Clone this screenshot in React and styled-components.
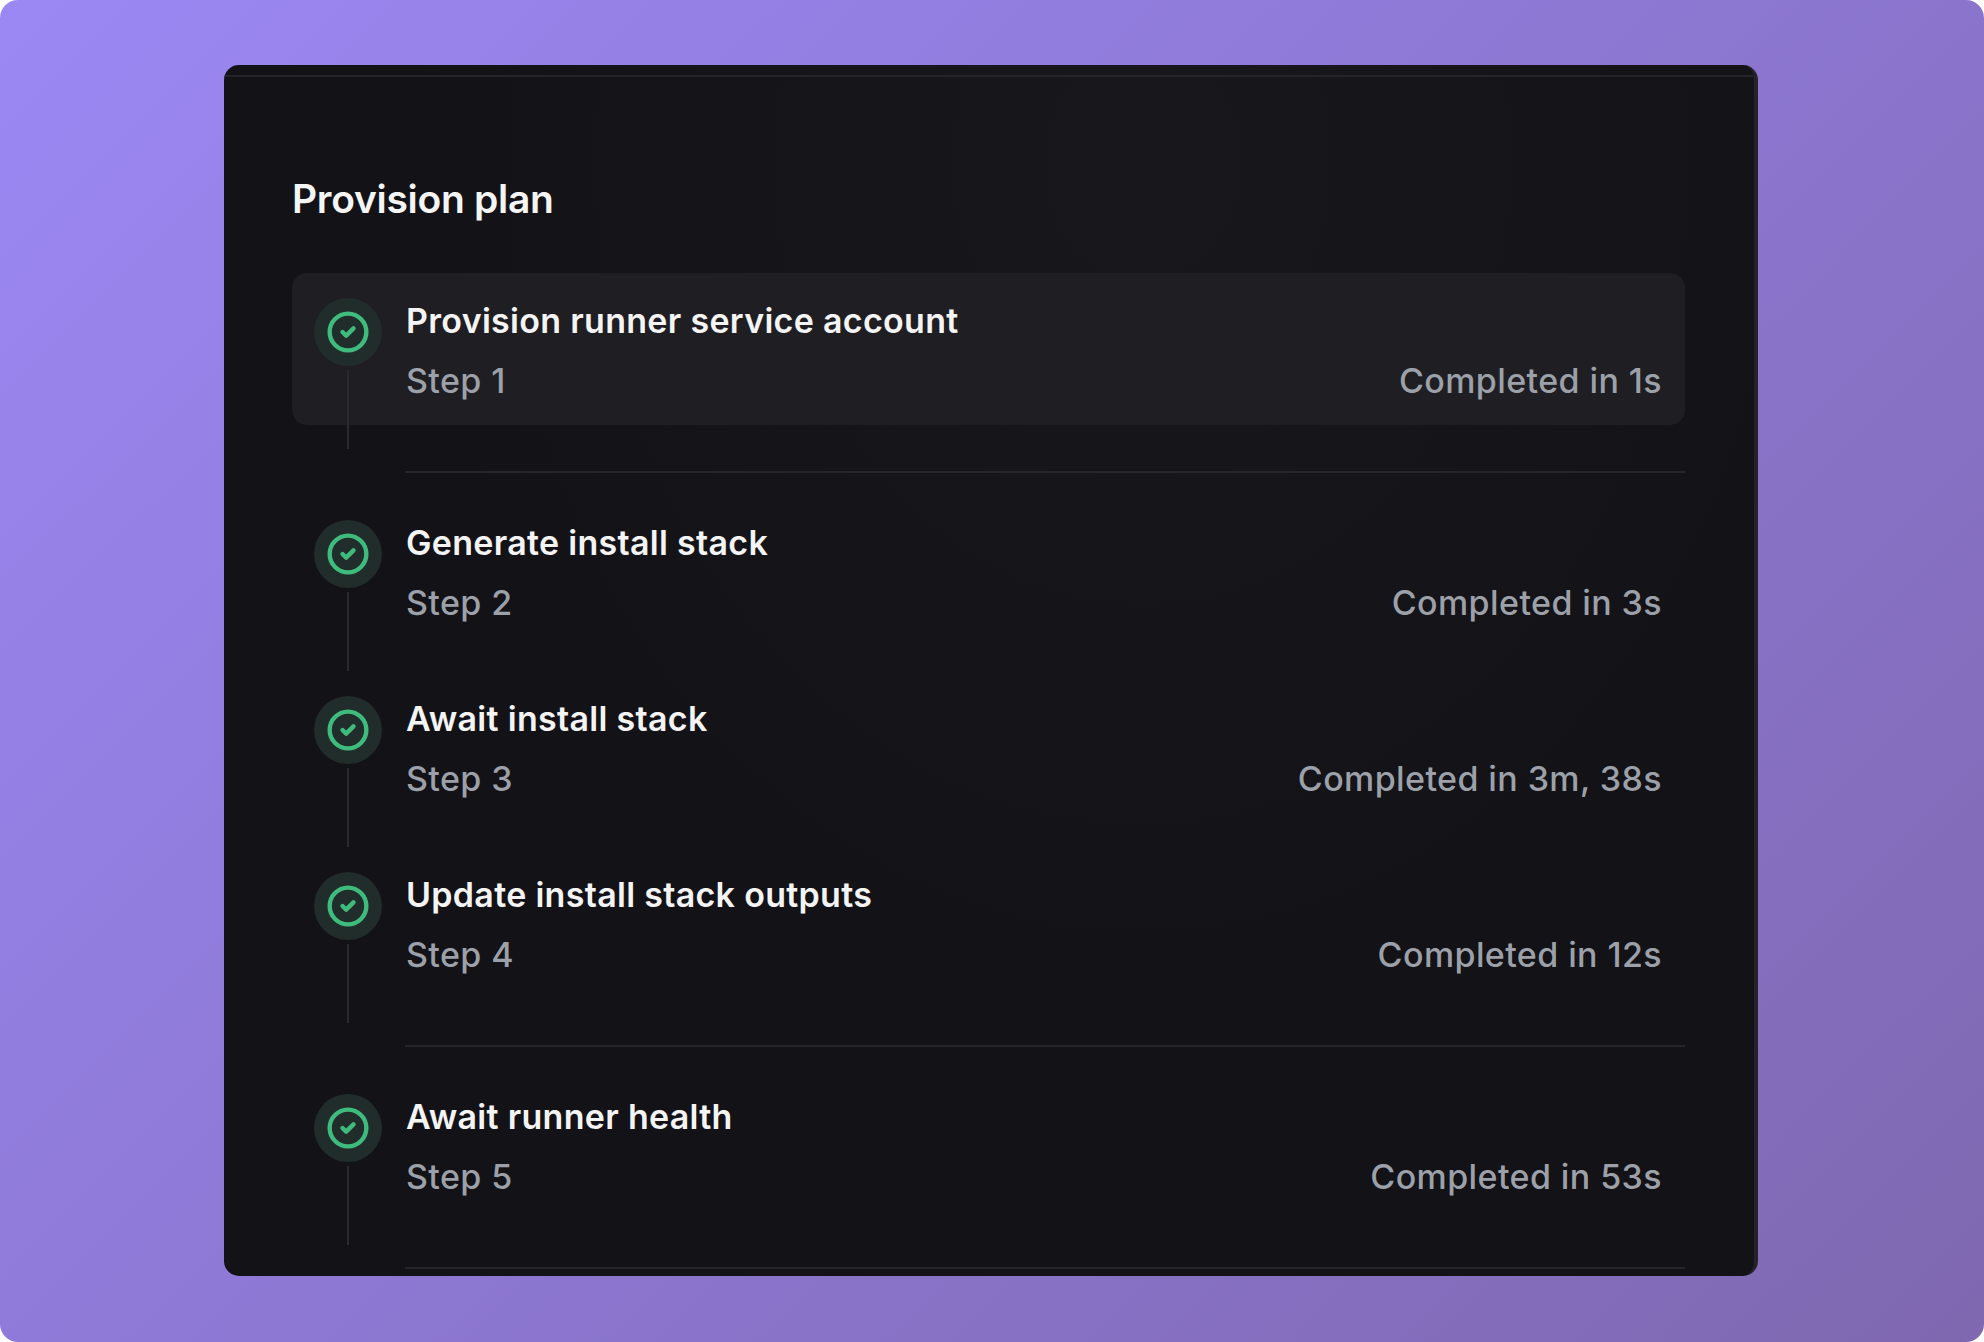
import React from "react";
import styled, { createGlobalStyle } from "styled-components";
import { CircleCheck } from "lucide-react";

const Global = createGlobalStyle`
  html, body { margin: 0; padding: 0; background: #ffffff; }
  body { font-family: Inter, "Noto Sans", sans-serif; -webkit-font-smoothing: antialiased; }
`;

const Frame = styled.div`
  width: 1984px;
  height: 1342px;
  box-sizing: border-box;
  border-radius: 18px;
  overflow: hidden;
  background: linear-gradient(135deg, #9b88f3 0%, #8e79d6 45%, #7f68b0 100%);
  padding: 65px 226px 0 224px;
`;

const Card = styled.div`
  height: 1211px;
  box-sizing: border-box;
  border-radius: 15px;
  overflow: hidden;
  background: radial-gradient(ellipse at 60% 8%, #18171c 0%, #131217 55%);
  border-right: 4px solid #24232a;
  padding-top: 10px;
`;

const Inner = styled.div`
  border-top: 2px solid #24232a;
  padding: 100px 69px 0 68px;
`;

const Title = styled.h1`
  margin: 0 0 52px;
  font-size: 39px;
  line-height: 44px;
  font-weight: 600;
  color: #f5f5f6;
  letter-spacing: -0.3px;
`;

const Divider = styled.div`
  height: 2px;
  background: #26252b;
  margin: 22px 0 22px 113px;
`;

const Row = styled.div`
  height: 176px;
`;

const Surface = styled.div`
  height: 152px;
  box-sizing: border-box;
  border-radius: 15px;
  background: ${(p) => (p.$active ? "#1f1e23" : "transparent")};
  display: grid;
  grid-template-columns: 68px 1fr;
  column-gap: 24px;
  padding: 25px 23px 0 22px;
`;

const IconCol = styled.div`
  display: flex;
  flex-direction: column;
  align-items: center;
  gap: 4px;
`;

const Badge = styled.div`
  width: 68px;
  height: 68px;
  border-radius: 50%;
  background: #212d2a;
  display: flex;
  align-items: center;
  justify-content: center;
  color: #3fbb7d;
`;

const Rail = styled.div`
  width: 2px;
  height: 79px;
  background: #2a292f;
`;

const Content = styled.div`
  padding-top: 3px;
  display: flex;
  flex-direction: column;
  gap: 20px;
`;

const StepTitle = styled.div`
  font-size: 34px;
  line-height: 40px;
  font-weight: 600;
  color: #f4f4f5;
  letter-spacing: 0.3px;
`;

const Meta = styled.div`
  display: flex;
  justify-content: space-between;
  font-size: 34px;
  line-height: 40px;
  font-weight: 500;
  color: #9ca1a9;
  letter-spacing: 0.4px;
`;

const groups = [
  [{ t: "Provision runner service account", n: 1, d: "1s", active: true }],
  [
    { t: "Generate install stack", n: 2, d: "3s" },
    { t: "Await install stack", n: 3, d: "3m, 38s" },
    { t: "Update install stack outputs", n: 4, d: "12s" },
  ],
  [{ t: "Await runner health", n: 5, d: "53s" }],
];

function Step({ s }) {
  return (
    <Row>
      <Surface $active={s.active}>
        <IconCol>
          <Badge>
            <CircleCheck size={44} strokeWidth={2.4} />
          </Badge>
          <Rail />
        </IconCol>
        <Content>
          <StepTitle>{s.t}</StepTitle>
          <Meta>
            <span>Step {s.n}</span>
            <span>Completed in {s.d}</span>
          </Meta>
        </Content>
      </Surface>
    </Row>
  );
}

export default function App() {
  return (
    <>
      <Global />
      <Frame>
        <Card>
          <Inner>
            <Title>Provision plan</Title>
            {groups.map((g, i) => (
              <React.Fragment key={i}>
                {g.map((s) => (
                  <Step key={s.n} s={s} />
                ))}
                <Divider />
              </React.Fragment>
            ))}
          </Inner>
        </Card>
      </Frame>
    </>
  );
}
